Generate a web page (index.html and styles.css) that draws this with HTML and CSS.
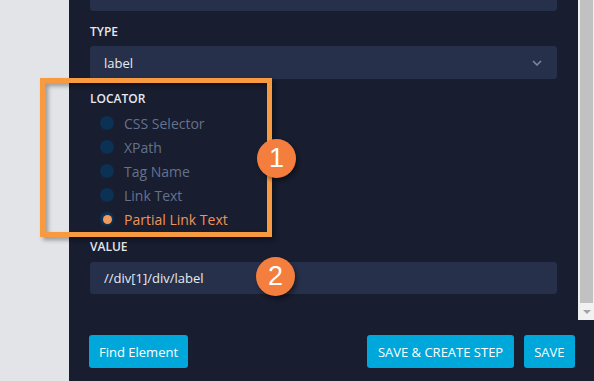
FILE: index.html
```html
<!DOCTYPE html>
<html>
<head>
<meta charset="utf-8">
<link rel="stylesheet" href="styles.css">
</head>
<body>
<div class="app">
  <div class="sidebar"></div>
  <div class="main">
    <div class="scroll">
      <div class="content">
        <div class="field top-field"></div>
        <div class="label">TYPE</div>
        <div class="field select">
          <span>label</span>
          <svg class="chev" width="10" height="6" viewBox="0 0 10 6"><path d="M1 1 L5 5 L9 1" fill="none" stroke="#7f88a3" stroke-width="1.5"/></svg>
        </div>
        <div class="label locator-label">LOCATOR</div>
        <ul class="radios">
          <li class="radio"><span class="dot"></span>CSS Selector</li>
          <li class="radio"><span class="dot"></span>XPath</li>
          <li class="radio"><span class="dot"></span>Tag Name</li>
          <li class="radio"><span class="dot"></span>Link Text</li>
          <li class="radio selected"><span class="dot"></span>Partial Link Text</li>
        </ul>
        <div class="label value-label">VALUE</div>
        <div class="field value"><span>//div[1]/div/label</span></div>
      </div>
      <div class="scrollbar">
        <div class="thumb"></div>
        <div class="arrow"></div>
      </div>
    </div>
    <div class="footer">
      <button class="btn">Find Element</button>
      <div class="spacer"></div>
      <button class="btn upper">SAVE &amp; CREATE STEP</button>
      <button class="btn upper">SAVE</button>
    </div>
  </div>
</div>
<div class="callout"></div>
<div class="badge badge-1">1</div>
<div class="badge badge-2">2</div>
</body>
</html>
```

FILE: styles.css
```css
html, body {
  margin: 0;
  padding: 0;
  width: 594px;
  height: 381px;
  overflow: hidden;
  font-family: "Open Sans", "Liberation Sans", sans-serif;
}
.app {
  display: flex;
  height: 381px;
}
.sidebar {
  width: 69px;
  background: #e3e4e8;
  flex: none;
}
.main {
  flex: 1;
  display: flex;
  flex-direction: column;
  background: #181d2f;
}
.scroll {
  height: 320px;
  display: flex;
  overflow: hidden;
}
.content {
  flex: 1;
  padding: 0 21px;
}
.field {
  background: #26304a;
  border-radius: 3px;
  height: 33px;
  box-sizing: border-box;
  display: flex;
  align-items: center;
  padding: 0 14px;
  color: #e8ebf2;
  font-size: 13px;
}
.top-field {
  margin-top: -22px;
}
.label {
  color: #e6e8ee;
  font-size: 12px;
  font-weight: 600;
  line-height: 16px;
  margin-top: 13px;
  margin-bottom: 6px;
}
.select {
  justify-content: space-between;
}
.chev {
  margin-right: 1px;
}
.locator-label {
  margin-top: 12px;
  margin-bottom: 4px;
}
.radios {
  list-style: none;
  margin: 0;
  padding: 0 0 0 10px;
}
.radio {
  height: 24px;
  display: flex;
  align-items: center;
  color: #65728e;
  font-size: 14px;
}
.dot {
  width: 14px;
  height: 14px;
  border-radius: 50%;
  background: #0b3154;
  margin-right: 10px;
  box-sizing: border-box;
  display: flex;
  align-items: center;
  justify-content: center;
}
.selected {
  color: #ef9459;
}
.selected .dot::after {
  content: "";
  width: 9px;
  height: 9px;
  border-radius: 50%;
  background: #f19a5f;
}
.value-label {
  margin-top: 8px;
  margin-bottom: 7px;
}
.value {
  height: 32px;
}
.scrollbar {
  width: 16px;
  flex: none;
  background: #f1f1f1;
  display: flex;
  flex-direction: column;
}
.thumb {
  height: 303px;
  margin: 0 1px 0 2px;
  background: #c1c1c1;
}
.arrow {
  flex: 1;
  display: flex;
  align-items: center;
  justify-content: center;
}
.arrow::after {
  content: "";
  border-left: 4px solid transparent;
  border-right: 4px solid transparent;
  border-top: 4px solid #a3a3a3;
  margin-left: 1px;
}
.footer {
  flex: 1;
  display: flex;
  align-items: flex-start;
  padding: 15px 19px 0 20px;
  gap: 10px;
}
.spacer {
  flex: 1;
}
.btn {
  height: 33px;
  border: none;
  border-radius: 3px;
  background: #00a7da;
  color: #ffffff;
  font-family: "Open Sans", "Liberation Sans", sans-serif;
  font-size: 13px;
  padding: 0 10px;
  cursor: pointer;
}
.upper {
  font-size: 13px;
  padding: 0 10.5px;
}
.callout {
  position: absolute;
  left: 40px;
  top: 78px;
  width: 232px;
  height: 159px;
  box-sizing: border-box;
  border: 5px solid #f89a40;
  filter: drop-shadow(3px 3px 2px rgba(0, 0, 0, 0.35));
}
.badge {
  position: absolute;
  width: 39px;
  height: 39px;
  border-radius: 50%;
  background: #f47e3e;
  color: #ffffff;
  font-family: "Liberation Sans", Arial, sans-serif;
  font-size: 27px;
  display: flex;
  align-items: center;
  justify-content: center;
  box-shadow: 2px 3px 4px rgba(0, 0, 0, 0.4);
}
.badge-1 {
  left: 257px;
  top: 139px;
}
.badge-2 {
  left: 256px;
  top: 257px;
}
```
